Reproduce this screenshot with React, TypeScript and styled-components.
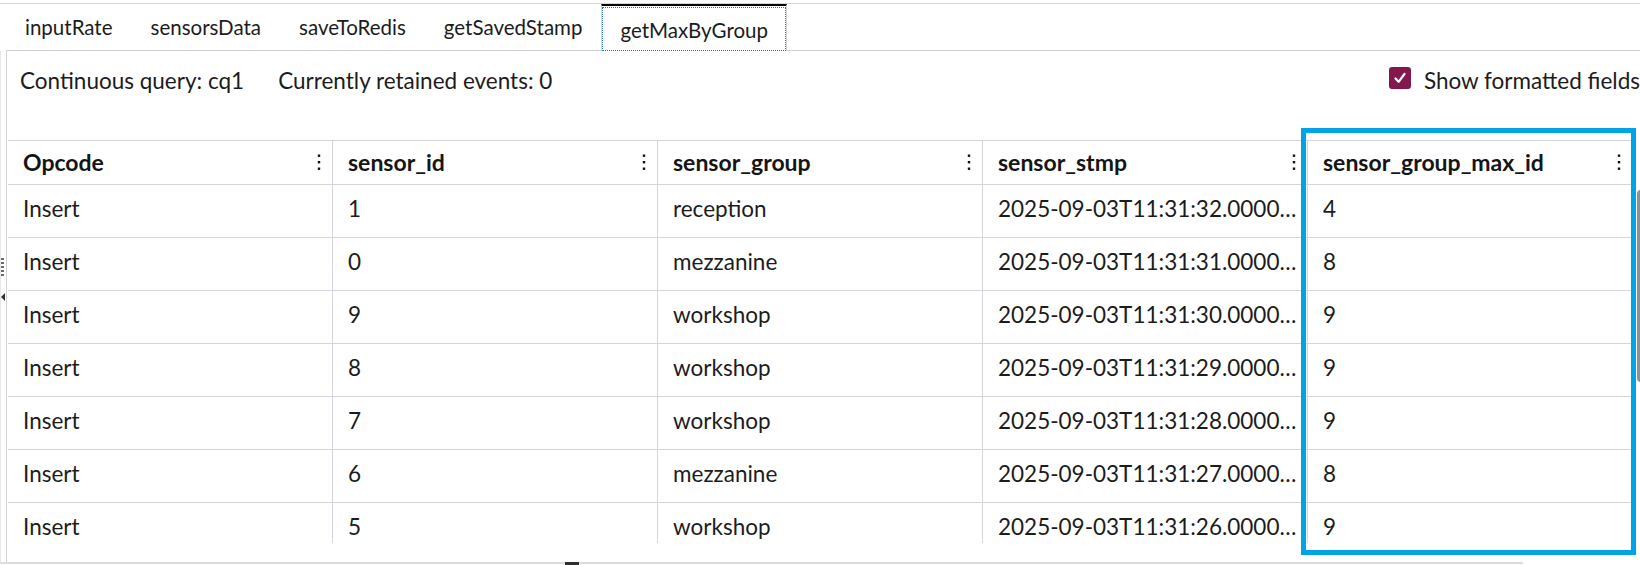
import React from "react";
import styled, { createGlobalStyle, css } from "styled-components";

const GlobalStyle = createGlobalStyle`
  html, body { margin: 0; padding: 0; background: #ffffff; overflow: hidden; }
  body { font-family: Lato, "Noto Sans", sans-serif; color: #1c1c1c; }
  * { box-sizing: border-box; }
`;

const Page = styled.div`
  position: relative;
  width: 1680px;
  height: 565px;
  padding-top: 3px;
`;

const Frame = styled.div`
  display: flex;
  flex-direction: column;
  height: 562px;
  border-top: 1px solid #d9d9d9;
`;

const TabBar = styled.div`
  display: flex;
  align-items: flex-start;
  height: 47px;
  margin-left: 6px;
  border-bottom: 1px solid #d3d3d3;
`;

const Tab = styled.div<{ $active?: boolean }>`
  position: relative;
  display: flex;
  align-items: center;
  height: 45px;
  padding: 0 19px;
  font-size: 20.5px;
  color: #1c1c1c;
  white-space: nowrap;
  ${(p) =>
    p.$active &&
    css`
      height: 47px;
      margin-bottom: -1px;
      padding: 3px 18px 0;
      background: #ffffff;
      border-top: 2px solid #000000;
      border-left: 1px solid #d3d3d3;
      border-right: 1px solid #d3d3d3;
      &::after {
        content: "";
        position: absolute;
        inset: 1px 0 0 0;
        border: 1px dotted #2f6fb8;
      }
    `}
`;

const Body = styled.div`
  display: flex;
  height: 511px;
`;

const Gutter = styled.div`
  width: 6px;
  display: flex;
  flex-direction: column;
  align-items: flex-start;
  padding-top: 207px;
  border-left: 1px solid #e8e8e8;
`;

const Grip = styled.div`
  width: 3px;
  height: 20px;
  background: repeating-linear-gradient(to bottom, #6b6b6b 0 2px, transparent 2px 4px);
`;

const Arrow = styled.div`
  margin-top: 15px;
  width: 0;
  height: 0;
  border-top: 4px solid transparent;
  border-bottom: 4px solid transparent;
  border-right: 4px solid #333333;
`;

const Panel = styled.div`
  flex: 1;
  display: flex;
  flex-direction: column;
  border-left: 1px solid #d3d3d3;
`;

const InfoBar = styled.div`
  display: flex;
  align-items: flex-start;
  height: 89px;
  padding: 16px 40px 0 13px;
  font-size: 22.5px;
  line-height: 28px;
`;

const InfoText = styled.span`
  margin-right: 34px;
  white-space: nowrap;
`;

const CheckLabel = styled.label`
  display: flex;
  align-items: center;
  gap: 13px;
  margin-left: auto;
  white-space: nowrap;
`;

const CheckBox = styled.span`
  display: inline-flex;
  align-items: center;
  justify-content: center;
  width: 22px;
  height: 22px;
  margin-bottom: 6px;
  border-radius: 3px;
  background: #85174f;
`;

const TableArea = styled.div`
  display: flex;
  height: 403px;
  overflow: hidden;
`;

const Grid = styled.div`
  display: grid;
  grid-template-columns: repeat(5, 325px);
  grid-auto-rows: 53px;
  grid-template-rows: 44px;
  margin-left: 1px;
  border-top: 1px solid #d4d5dd;
  align-content: start;
`;

const HeadCell = styled.div`
  display: flex;
  align-items: center;
  justify-content: space-between;
  padding: 0 11px 1px 15px;
  font-size: 23px;
  font-weight: 700;
  color: #151515;
  border-right: 1px solid #d4d5dd;
  border-bottom: 1px solid #d4d5dd;
`;

const Cell = styled.div`
  display: flex;
  align-items: center;
  padding: 0 6px 6px 15px;
  font-size: 22.5px;
  color: #1c1c1c;
  border-right: 1px solid #d4d5dd;
  border-bottom: 1px solid #d4d5dd;
  overflow: hidden;
`;

const CellText = styled.span`
  white-space: nowrap;
  overflow: hidden;
  text-overflow: ellipsis;
`;

const ScrollTrack = styled.div`
  width: 10px;
  margin-left: 4px;
  padding-top: 50px;
`;

const ScrollThumb = styled.div`
  width: 8px;
  height: 192px;
  border-radius: 4px;
  background: #8b9099;
`;

const BottomBar = styled.div`
  display: flex;
  width: 1523px;
  height: 2px;
  background: #dcdcdc;
`;

const Handle = styled.div`
  width: 14px;
  height: 3px;
  margin-left: 565px;
  background: #2e2e2e;
`;

const Highlight = styled.div`
  position: absolute;
  left: 1301px;
  top: 128px;
  width: 335px;
  height: 427px;
  border: 5px solid #00a3e6;
  pointer-events: none;
`;

const Kebab = () => (
  <svg width="4" height="17" viewBox="0 0 4 17" aria-hidden="true">
    <rect x="0.8" y="0.5" width="2.4" height="2.4" fill="#111" />
    <rect x="0.8" y="7" width="2.4" height="2.4" fill="#111" />
    <rect x="0.8" y="13.5" width="2.4" height="2.4" fill="#111" />
  </svg>
);

const Check = () => (
  <svg width="14" height="14" viewBox="0 0 14 14" aria-hidden="true">
    <path d="M2.5 7.5 L5.6 10.8 L11.5 3" fill="none" stroke="#ffffff" strokeWidth="2.2" strokeLinecap="round" strokeLinejoin="round" />
  </svg>
);

const tabs = ["inputRate", "sensorsData", "saveToRedis", "getSavedStamp", "getMaxByGroup"];
const columns = ["Opcode", "sensor_id", "sensor_group", "sensor_stmp", "sensor_group_max_id"];
const rows: [string, string, string, string, string][] = [
  ["Insert", "1", "reception", "2025-09-03T11:31:32.0000…", "4"],
  ["Insert", "0", "mezzanine", "2025-09-03T11:31:31.0000…", "8"],
  ["Insert", "9", "workshop", "2025-09-03T11:31:30.0000…", "9"],
  ["Insert", "8", "workshop", "2025-09-03T11:31:29.0000…", "9"],
  ["Insert", "7", "workshop", "2025-09-03T11:31:28.0000…", "9"],
  ["Insert", "6", "mezzanine", "2025-09-03T11:31:27.0000…", "8"],
  ["Insert", "5", "workshop", "2025-09-03T11:31:26.0000…", "9"],
];

export default function App() {
  return (
    <>
      <GlobalStyle />
      <Page>
        <Frame>
          <TabBar>
            {tabs.map((t, i) => (
              <Tab key={t} $active={i === tabs.length - 1}>
                {t}
              </Tab>
            ))}
          </TabBar>
          <Body>
            <Gutter>
              <Grip />
              <Arrow />
            </Gutter>
            <Panel>
              <InfoBar>
                <InfoText>Continuous query: cq1</InfoText>
                <InfoText>Currently retained events: 0</InfoText>
                <CheckLabel>
                  <CheckBox>
                    <Check />
                  </CheckBox>
                  Show formatted fields
                </CheckLabel>
              </InfoBar>
              <TableArea>
                <Grid>
                  {columns.map((c) => (
                    <HeadCell key={c}>
                      <span>{c}</span>
                      <Kebab />
                    </HeadCell>
                  ))}
                  {rows.map((r, ri) =>
                    r.map((v, ci) => (
                      <Cell key={`${ri}-${ci}`}>
                        <CellText>{v}</CellText>
                      </Cell>
                    ))
                  )}
                </Grid>
                <ScrollTrack>
                  <ScrollThumb />
                </ScrollTrack>
              </TableArea>
            </Panel>
          </Body>
          <BottomBar>
            <Handle />
          </BottomBar>
        </Frame>
        <Highlight />
      </Page>
    </>
  );
}
